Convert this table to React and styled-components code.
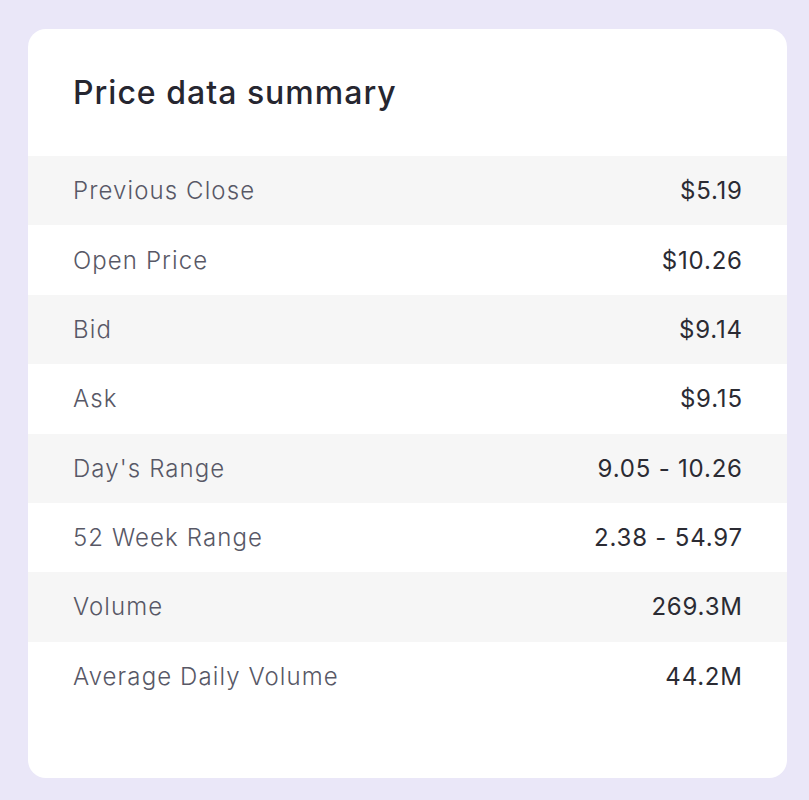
import React from "react";
import styled, { createGlobalStyle } from "styled-components";

const Global = createGlobalStyle`
  html, body { margin: 0; padding: 0; background: #EAE7F8; }
  body { font-family: Inter, "Noto Sans", sans-serif; }
`;

const Page = styled.div`
  padding: 29px 22px 22px 28px;
`;

const Card = styled.div`
  background: #ffffff;
  border-radius: 18px;
  height: 749px;
  box-sizing: border-box;
  display: flex;
  flex-direction: column;
  overflow: hidden;
`;

const Header = styled.div`
  height: 127px;
  display: flex;
  align-items: center;
  padding: 0 45px;
  box-sizing: border-box;
`;

const Title = styled.h2`
  margin: 0;
  font-size: 32px;
  font-weight: 500;
  color: #262630;
  letter-spacing: 1px;
`;

const Row = styled.div`
  height: 69.375px;
  display: flex;
  align-items: center;
  justify-content: space-between;
  padding: 0 45px;
  box-sizing: border-box;
  background: ${(p) => (p.$shaded ? "#F6F6F6" : "#FFFFFF")};
`;

const Label = styled.span`
  font-size: 24px;
  font-weight: 300;
  color: #585866;
  letter-spacing: 1.1px;
`;

const Value = styled.span`
  font-size: 24px;
  font-weight: 400;
  color: #2b2b33;
  letter-spacing: 0.8px;
  margin-right: -0.8px;
`;

const rows = [
  ["Previous Close", "$5.19"],
  ["Open Price", "$10.26"],
  ["Bid", "$9.14"],
  ["Ask", "$9.15"],
  ["Day's Range", "9.05 - 10.26"],
  ["52 Week Range", "2.38 - 54.97"],
  ["Volume", "269.3M"],
  ["Average Daily Volume", "44.2M"],
];

export default function App() {
  return (
    <Page>
      <Global />
      <Card>
        <Header>
          <Title>Price data summary</Title>
        </Header>
        {rows.map(([l, v], i) => (
          <Row key={l} $shaded={i % 2 === 0}>
            <Label>{l}</Label>
            <Value>{v}</Value>
          </Row>
        ))}
      </Card>
    </Page>
  );
}
